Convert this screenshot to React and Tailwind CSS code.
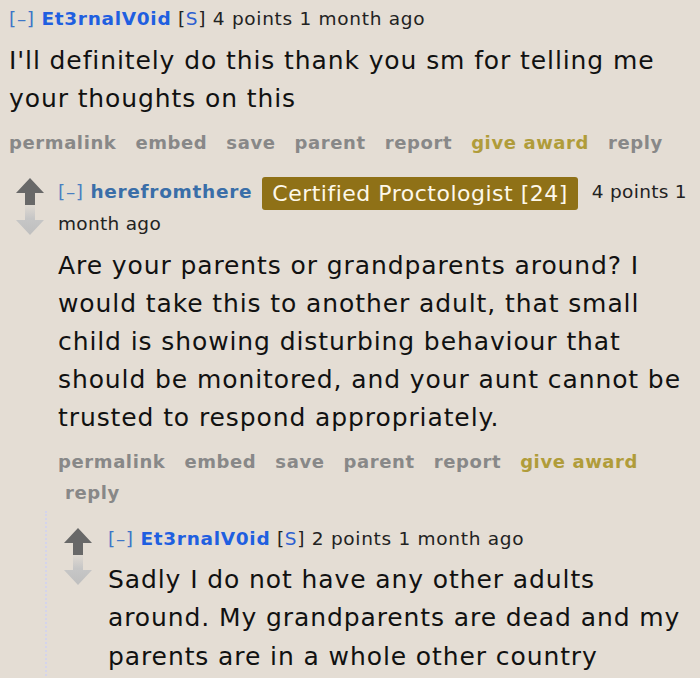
import React from 'react'

const FONT = { fontFamily: '"DejaVu Sans", Verdana, sans-serif' }

function Arrows({ id }) {
  return (
    <div className="flex flex-col items-center w-[28px] shrink-0">
      <svg width="28" height="27" viewBox="0 0 28 27">
        <path d="M14 0 L28 15 L19 15 L19 27 L9 27 L9 15 L0 15 Z" fill="#686868" />
      </svg>
      <svg width="28" height="31" viewBox="0 0 28 31">
        <defs>
          <linearGradient id={id} x1="0" y1="0" x2="0" y2="1">
            <stop offset="0" stopColor="#c6c6c6" stopOpacity="0.15" />
            <stop offset="0.45" stopColor="#c6c6c6" />
            <stop offset="1" stopColor="#bfbfbf" />
          </linearGradient>
        </defs>
        <path d="M9 0 L19 0 L19 15 L28 15 L14 30 L0 15 L9 15 Z" fill={`url(#${id})`} />
      </svg>
    </div>
  )
}

function Buttons({ wrap }) {
  const items = ['permalink', 'embed', 'save', 'parent', 'report', 'give award', 'reply']
  return (
    <ul className="flex flex-wrap gap-x-[19px] gap-y-[9px] font-bold text-[18px] tracking-[0.6px] leading-[22px] text-[#888888]">
      {items.map((t, i) => (
        <li key={t} className={`${t === 'give award' ? 'text-[#b09c3a]' : ''} ${wrap && i === 6 ? 'pl-[7px]' : ''}`}>
          {t}
        </li>
      ))}
    </ul>
  )
}

function Tag({ points }) {
  return (
    <p className="text-[18.5px] tracking-[0.7px] leading-[22px] text-[#222]">
      <span className="text-[#3d75c7]">[–]</span>{' '}
      <span className="font-bold text-[#1f5fe0]">Et3rnalV0id</span>{' '}
      <span>[<span className="text-[#2d5fd0]">S</span>]</span> {points} points 1 month ago
    </p>
  )
}

export default function App() {
  return (
    <div className="w-[700px] h-[678px] overflow-hidden bg-[#e4ddd4] text-[#111]" style={FONT}>
      {/* first comment */}
      <div className="pl-[9px] pt-[8px]">
        <Tag points={4} />
        <p className="text-[25px] tracking-[0.9px] leading-[38px] mt-[12px] pr-[4px]">
          I'll definitely do this thank you sm for telling me your thoughts on this
        </p>
        <div className="mt-[14px]">
          <Buttons />
        </div>
      </div>

      {/* second comment */}
      <div className="flex pl-[16px] pt-[22px] gap-[14px]">
        <div className="pt-[2px]">
          <Arrows id="g1" />
        </div>
        <div className="flex-1 min-w-0">
          <p className="text-[18.5px] tracking-[0.7px] leading-[31px] text-[#222]">
            <span className="text-[#4a7fc1]">[–]</span>{' '}
            <span className="font-bold text-[#3a6ea8]">herefromthere</span>
            <span className="inline-block align-middle bg-[#8f7117] text-[#fdf8ea] text-[22px] tracking-[0.5px] leading-[33px] h-[33px] px-[10px] rounded-[3px] ml-[10px] mr-[14px] -my-[2px]">
              Certified Proctologist [24]
            </span>
            <span className="tracking-[0.3px]">4 points 1 month ago</span>
          </p>
          <p className="text-[25px] tracking-[0.9px] leading-[38px] mt-[8px] pr-[8px]">
            Are your parents or grandparents around? I would take this to another adult, that small child is showing disturbing behaviour that should be monitored, and your aunt cannot be trusted to respond appropriately.
          </p>
          <div className="mt-[14px] pr-[40px]">
            <Buttons wrap />
          </div>

          {/* child */}
          <div className="ml-[-13px] mt-[7px] border-l-2 border-dotted border-[#d4d4ec] pl-[17px] pt-[17px]">
            <div className="flex gap-[16px]">
              <Arrows id="g2" />
              <div className="flex-1 min-w-0">
                <Tag points={2} />
                <p className="text-[25px] tracking-[0.9px] leading-[38.5px] mt-[11px] pr-[6px]">
                  Sadly I do not have any other adults around. My grandparents are dead and my parents are in a whole other country
                </p>
              </div>
            </div>
          </div>
        </div>
      </div>
    </div>
  )
}
